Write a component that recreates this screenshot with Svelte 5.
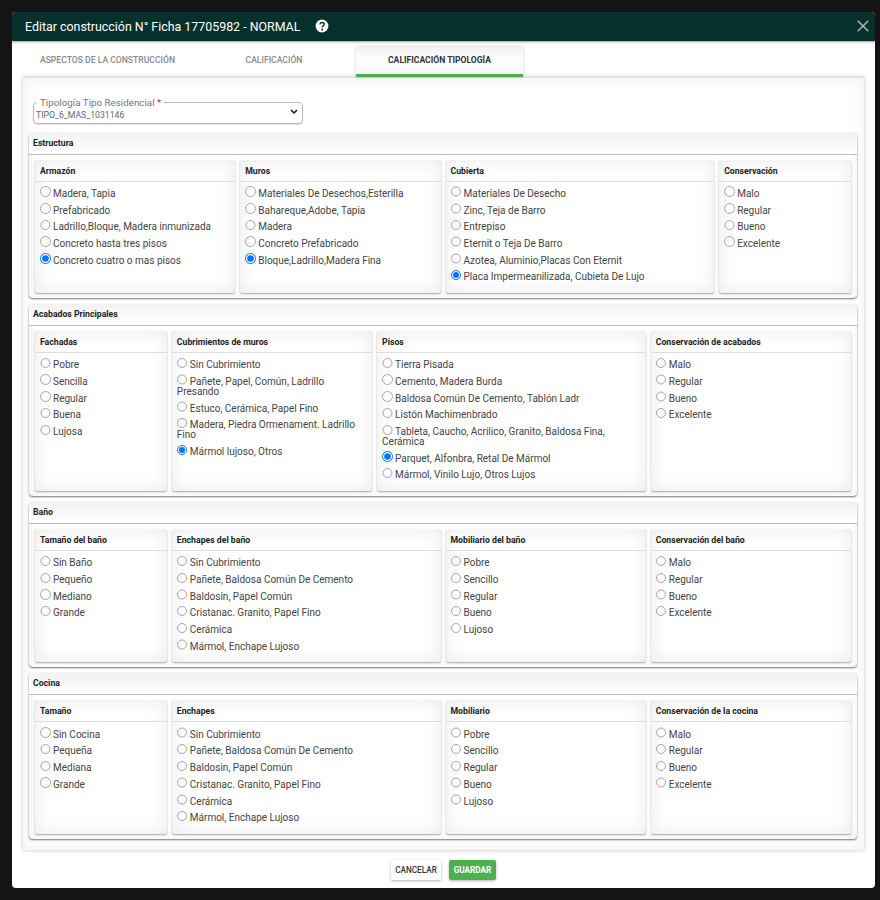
<script>
	const malo = ['Malo', 'Regular', 'Bueno', 'Excelente'];
	const pobre = ['Pobre', 'Sencillo', 'Regular', 'Bueno', 'Lujoso'];
	const enchapes = [
		'Sin Cubrimiento',
		'Pañete, Baldosa Común De Cemento',
		'Baldosin, Papel Común',
		'Cristanac. Granito, Papel Fino',
		'Cerámica',
		'Mármol, Enchape Lujoso'
	];

	const sections = [
		{
			title: 'Estructura',
			groups: [
				{ name: 'Armazón', span: 3, sel: 4, options: ['Madera, Tapia', 'Prefabricado', 'Ladrillo,Bloque, Madera inmunizada', 'Concreto hasta tres pisos', 'Concreto cuatro o mas pisos'] },
				{ name: 'Muros', span: 3, sel: 4, options: ['Materiales De Desechos,Esterilla', 'Bahareque,Adobe, Tapia', 'Madera', 'Concreto Prefabricado', 'Bloque,Ladrillo,Madera Fina'] },
				{ name: 'Cubierta', span: 4, sel: 5, options: ['Materiales De Desecho', 'Zinc, Teja de Barro', 'Entrepiso', 'Eternit o Teja De Barro', 'Azotea, Aluminio,Placas Con Eternit', 'Placa Impermeanilizada, Cubieta De Lujo'] },
				{ name: 'Conservación', span: 2, sel: -1, options: malo }
			]
		},
		{
			title: 'Acabados Principales',
			groups: [
				{ name: 'Fachadas', span: 2, sel: -1, options: ['Pobre', 'Sencilla', 'Regular', 'Buena', 'Lujosa'] },
				{ name: 'Cubrimientos de muros', span: 3, sel: 4, options: ['Sin Cubrimiento', 'Pañete, Papel, Común, Ladrillo Presando', 'Estuco, Cerámica, Papel Fino', 'Madera, Piedra Ormenament. Ladrillo Fino', 'Mármol lujoso, Otros'] },
				{ name: 'Pisos', span: 4, sel: 5, options: ['Tierra Pisada', 'Cemento, Madera Burda', 'Baldosa Común De Cemento, Tablón Ladr', 'Listón Machimenbrado', 'Tableta, Caucho, Acrilico, Granito, Baldosa Fina, Cerámica', 'Parquet, Alfonbra, Retal De Mármol', 'Mármol, Vinilo Lujo, Otros Lujos'] },
				{ name: 'Conservación de acabados', span: 3, sel: -1, options: malo }
			]
		},
		{
			title: 'Baño',
			groups: [
				{ name: 'Tamaño del baño', span: 2, sel: -1, options: ['Sin Baño', 'Pequeño', 'Mediano', 'Grande'] },
				{ name: 'Enchapes del baño', span: 4, sel: -1, options: enchapes },
				{ name: 'Mobiliario del baño', span: 3, sel: -1, options: pobre },
				{ name: 'Conservación del baño', span: 3, sel: -1, options: malo }
			]
		},
		{
			title: 'Cocina',
			groups: [
				{ name: 'Tamaño', span: 2, sel: -1, options: ['Sin Cocina', 'Pequeña', 'Mediana', 'Grande'] },
				{ name: 'Enchapes', span: 4, sel: -1, options: enchapes },
				{ name: 'Mobiliario', span: 3, sel: -1, options: pobre },
				{ name: 'Conservación de la cocina', span: 3, sel: -1, options: malo }
			]
		}
	];
</script>

<div class="backdrop">
	<div class="modal">
		<header class="head">
			<h1>Editar construcción N° Ficha 17705982 - NORMAL</h1>
			<svg class="help" viewBox="0 0 24 24" width="14" height="14">
				<circle cx="12" cy="12" r="11" fill="#fff" />
				<path d="M8.4 9.2c.2-2 1.7-3.2 3.7-3.2 2.1 0 3.6 1.3 3.6 3 0 1.4-.8 2.1-1.8 2.8-1 .7-1.5 1.2-1.5 2.4v.4" fill="none" stroke="#06302c" stroke-width="2.4" />
				<circle cx="12.3" cy="18" r="1.6" fill="#06302c" />
			</svg>
			<svg class="close" viewBox="0 0 12 12" width="12" height="12">
				<path d="M.7.7l10.6 10.6M11.3.7L.7 11.3" stroke="#a9b8b6" stroke-width="1.5" fill="none" />
			</svg>
		</header>

		<div class="content">
			<nav class="tabs">
				<button class="tab t1">ASPECTOS DE LA CONSTRUCCIÓN</button>
				<button class="tab t2">CALIFICACIÓN</button>
				<button class="tab t3 active">CALIFICACIÓN TIPOLOGÍA</button>
			</nav>

			<div class="panel">
				<fieldset class="tipologia">
					<legend>Tipología Tipo Residencial <span class="req">*</span></legend>
					<select>
						<option>TIPO_6_MAS_1031146</option>
					</select>
				</fieldset>

				{#each sections as section}
					<section class="section">
						<h2>{section.title}</h2>
						<div class="grid">
							{#each section.groups as group}
								<div class="card" style="grid-column: span {group.span}">
									<h3>{group.name}</h3>
									<div class="options">
										{#each group.options as option, i}
											<label>
												<input type="radio" name="{section.title}-{group.name}" checked={i === group.sel} />{option}
											</label>
										{/each}
									</div>
								</div>
							{/each}
						</div>
					</section>
				{/each}
			</div>

			<footer class="actions">
				<button class="btn cancel">CANCELAR</button>
				<button class="btn save">GUARDAR</button>
			</footer>
		</div>
	</div>
</div>

<style>
	:global(body) {
		margin: 0;
		background: #141414;
		font-family: Roboto, 'Liberation Sans', sans-serif;
	}
	.backdrop {
		height: 900px;
		box-sizing: border-box;
		padding: 12px 5px 12px 12px;
		overflow: hidden;
	}
	.modal {
		height: 876px;
		background: #fff;
		border-radius: 4px;
		overflow: hidden;
		display: flex;
		flex-direction: column;
	}
	.head {
		height: 28.5px;
		flex: none;
		background: #06302c;
		display: flex;
		align-items: center;
		padding: 0 6px 0 13px;
		box-shadow: 0 1px 2px rgba(0, 0, 0, 0.4);
	}
	h1 {
		margin: 0;
		font-size: 12.4px;
		font-weight: 400;
		color: #fff;
	}
	.help {
		margin-left: 15px;
	}
	.close {
		margin-left: auto;
	}
	.content {
		flex: 1;
		padding: 6.5px 11px 0;
	}
	.tabs {
		display: flex;
		height: 29.5px;
	}
	.tab {
		border: none;
		background: none;
		font: 500 8.6px Roboto, sans-serif;
		color: #8a8a8a;
		padding: 0 0 4px;
		height: 100%;
	}
	.t1 {
		width: 169px;
	}
	.t2 {
		width: 164px;
	}
	.t3 {
		width: 167px;
		padding-bottom: 1px;
	}
	.active {
		color: #333;
		font-weight: 700;
		background: linear-gradient(#f1f1f1, #fff 50%, #f6f6f6);
		border-bottom: 3px solid #4caf50;
		box-shadow: 0 0 3px rgba(0, 0, 0, 0.2);
	}
	.panel {
		border-top: 1px solid #ddd;
		height: 773px;
		box-sizing: border-box;
		padding: 19px 7px 0 6px;
		box-shadow: 0 0 4px rgba(0, 0, 0, 0.25), inset 0 0 18px rgba(0, 0, 0, 0.06);
	}
	.tipologia {
		margin: 0 0 9px 4px;
		width: 270px;
		height: 27px;
		box-sizing: border-box;
		border: 1px solid #bbb;
		border-radius: 4px;
		padding: 0;
		box-shadow: 0 1px 1px rgba(0, 0, 0, 0.12);
	}
	legend {
		margin-left: 3px;
		padding: 0 3px;
		font-size: 9.8px;
		line-height: 12px;
		color: #777;
	}
	.req {
		color: #c33;
	}
	select {
		display: block;
		width: 100%;
		height: 12px;
		border: none;
		outline: none;
		appearance: none;
		background: url("data:image/svg+xml,%3Csvg xmlns='http://www.w3.org/2000/svg' viewBox='0 0 8 6'%3E%3Cpath d='M1 1l3 3 3-3' fill='none' stroke='%23111' stroke-width='1.5'/%3E%3C/svg%3E") no-repeat right 4px top 0 / 8px 6px;
		font: 8.7px Roboto, sans-serif;
		line-height: 12px;
		color: #666;
		padding: 0 0 0 2px;
	}
	.section {
		margin-bottom: 6.3px;
		border-radius: 4px;
		box-shadow: 0 1px 2px rgba(0, 0, 0, 0.55), inset 0 0 12px rgba(0, 0, 0, 0.05);
	}
	h2 {
		margin: 0;
		height: 22px;
		line-height: 21px;
		padding-left: 4px;
		box-sizing: border-box;
		border-bottom: 1px solid #bbb;
		font-size: 8.7px;
		font-weight: 700;
		color: #222;
		background: linear-gradient(#f2f2f2, #fff);
	}
	.grid {
		display: grid;
		grid-template-columns: repeat(12, 1fr);
		gap: 5px;
		padding: 5px 6px 5px;
	}
	.card {
		background: #fff;
		border-radius: 2px;
		box-shadow: 0 1px 2px rgba(0, 0, 0, 0.35), inset 0 0 18px rgba(0, 0, 0, 0.09);
		min-height: 132px;
	}
	h3 {
		margin: 0;
		height: 22px;
		line-height: 23px;
		padding-left: 5px;
		box-sizing: border-box;
		border-bottom: 1px solid #ddd;
		font-size: 8.7px;
		font-weight: 700;
		color: #222;
	}
	.options {
		padding: 7.4px 5px 3.6px;
	}
	label {
		display: block;
		font-size: 10px;
		line-height: 10px;
		margin-bottom: 6.7px;
		color: #444;
	}
	input {
		width: 10.5px;
		height: 10.5px;
		margin: -3px 2.5px 0 0;
	}
	input:not(:checked) {
		opacity: 0.65;
	}
	.actions {
		display: flex;
		justify-content: center;
		gap: 8px;
		margin-top: 10px;
	}
	.btn {
		height: 20px;
		border: none;
		border-radius: 2px;
		font: 500 8.2px Roboto, sans-serif;
		padding: 0;
		box-shadow: 0 1px 3px rgba(0, 0, 0, 0.3);
	}
	.cancel {
		width: 50px;
		background: #fff;
		color: #333;
	}
	.save {
		width: 47px;
		background: #4caf50;
		color: #fff;
		font-weight: 700;
	}
</style>
